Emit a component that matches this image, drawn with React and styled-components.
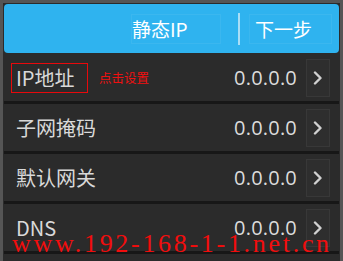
import React from 'react';
import styled, { createGlobalStyle } from 'styled-components';

const GlobalStyle = createGlobalStyle`
  html, body {
    margin: 0;
    padding: 0;
    background: #2a2a2a;
  }
  body {
    width: 343px;
    height: 261px;
    overflow: hidden;
    font-family: "Open Sans", "Noto Sans CJK SC", sans-serif;
  }
`;

const Frame = styled.div`
  position: relative;
  box-sizing: border-box;
  width: 343px;
  height: 261px;
  background: #2b2b2b;
  border: 3px solid #555;
  border-bottom: none;
  padding: 1px 1px 0 1px;
  overflow: hidden;
`;

const Header = styled.div`
  display: flex;
  align-items: center;
  height: 49px;
  background: #2fb3ef;
  border-radius: 4px;
  padding-left: 127px;
  color: #fff;
  font-family: "Noto Sans CJK SC", sans-serif;
`;

const HeaderText = styled.div`
  box-sizing: border-box;
  width: ${({ $w }) => $w}px;
  height: 30px;
  display: flex;
  align-items: center;
  padding-left: ${({ $pl }) => $pl || 0}px;
  font-size: 19px;
  border: 1px solid rgba(255, 255, 255, 0.06);
`;

const Divider = styled.div`
  width: 2px;
  height: 32px;
  margin: 0 9px 0 17px;
  background: #a9def6;
`;

const List = styled.div`
  display: flex;
  flex-direction: column;
  margin-top: 1px;
`;

const Row = styled.div`
  display: flex;
  align-items: center;
  height: 47px;
  padding: 0 9px 0 7px;
  border-bottom: 3px solid #171717;
  color: #d9d9d9;
`;

const Label = styled.div`
  box-sizing: border-box;
  display: flex;
  align-items: center;
  height: 30px;
  padding: 0 4px;
  font-family: "Noto Sans CJK SC", sans-serif;
  font-size: 20px;
  border: 1.5px solid ${({ $marked }) => ($marked ? '#e8090c' : 'transparent')};
  width: ${({ $marked }) => ($marked ? '77px' : 'auto')};
`;

const Hint = styled.span`
  margin-left: 11px;
  color: #f01010;
  font-family: "Noto Sans CJK SC", sans-serif;
  font-size: 12.5px;
`;

const Value = styled.div`
  margin-left: auto;
  font-size: 20px;
  color: #dcdcdc;
  letter-spacing: 0.2px;
`;

const ArrowBox = styled.div`
  box-sizing: border-box;
  display: flex;
  align-items: center;
  justify-content: center;
  width: 24px;
  height: 38px;
  margin-left: 9px;
  border: 1px solid rgba(255, 255, 255, 0.05);
  background: rgba(255, 255, 255, 0.015);
`;

const Watermark = styled.div`
  position: absolute;
  left: 9px;
  top: 226px;
  color: #f20d0d;
  font-family: "Liberation Serif", serif;
  font-size: 26px;
  letter-spacing: 2.7px;
  white-space: nowrap;
`;

const Chevron = () => (
  <svg width="10" height="14" viewBox="0 0 10 14">
    <path d="M2 1.5 L7.5 7 L2 12.5" fill="none" stroke="#d0d0d0" strokeWidth="2.4" strokeLinecap="round" strokeLinejoin="round" />
  </svg>
);

const rows = [
  { label: 'IP地址', marked: true },
  { label: '子网掩码' },
  { label: '默认网关' },
  { label: 'DNS' },
];

export default function App() {
  return (
    <>
      <GlobalStyle />
      <Frame>
        <Header>
          <HeaderText $w={90}>静态IP</HeaderText>
          <Divider />
          <HeaderText $w={83} $pl={5}>下一步</HeaderText>
        </Header>
        <List>
          {rows.map((r) => (
            <Row key={r.label}>
              <Label $marked={r.marked}>{r.label}</Label>
              {r.marked && <Hint>点击设置</Hint>}
              <Value>0.0.0.0</Value>
              <ArrowBox>
                <Chevron />
              </ArrowBox>
            </Row>
          ))}
        </List>
        <Watermark>www.192-168-1-1.net.cn</Watermark>
      </Frame>
    </>
  );
}
